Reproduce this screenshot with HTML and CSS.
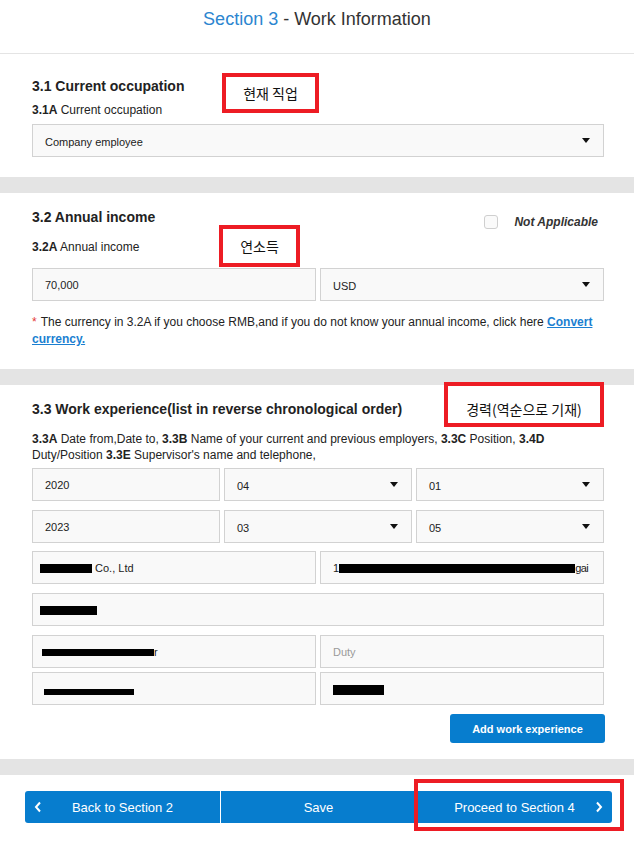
FILE: index.html
```html
<!DOCTYPE html>
<html lang="en">
<head>
<meta charset="utf-8">
<title>Section 3 - Work Information</title>
<link rel="stylesheet" href="styles.css">
</head>
<body>
<header class="page-header">
  <h1 class="title"><span class="title-num">Section 3</span> - Work Information</h1>
</header>
<main class="sections">
  <section class="card card-first">
    <h3 class="q-title">3.1 Current occupation</h3>
    <div class="q-label"><b>3.1A</b> Current occupation</div>
    <div class="field select mt6"><span class="val">Company employee</span><span class="caret"></span></div>
    <div class="tag tag-job">현재 직업</div>
  </section>

  <section class="card card-income">
    <div class="q-head">
      <h3 class="q-title">3.2 Annual income</h3>
      <div class="na">
        <span class="checkbox"></span>
        <span class="na-text">Not Applicable</span>
      </div>
    </div>
    <div class="q-label mt10"><b>3.2A</b> Annual income</div>
    <div class="grid2 mt13">
      <div class="field"><span class="val">70,000</span></div>
      <div class="field select"><span class="val">USD</span><span class="caret"></span></div>
    </div>
    <p class="note"><span class="star">*</span> The currency in 3.2A if you choose RMB,and if you do not know your annual income, click here <a class="link" href="#">Convert currency.</a></p>
    <div class="tag tag-income">연소득</div>
  </section>

  <section class="card card-work">
    <h3 class="q-title">3.3 Work experience(list in reverse chronological order)</h3>
    <p class="desc"><b>3.3A</b> Date from,Date to, <b>3.3B</b> Name of your current and previous employers, <b>3.3C</b> Position, <b>3.4D</b> Duty/Position <b>3.3E</b> Supervisor's name and telephone,</p>
    <div class="rows">
      <div class="grid3">
        <div class="field"><span class="val">2020</span></div>
        <div class="field select"><span class="val">04</span><span class="caret"></span></div>
        <div class="field select"><span class="val">01</span><span class="caret"></span></div>
      </div>
      <div class="grid3">
        <div class="field"><span class="val">2023</span></div>
        <div class="field select"><span class="val">03</span><span class="caret"></span></div>
        <div class="field select"><span class="val">05</span><span class="caret"></span></div>
      </div>
      <div class="grid2 row-tight1">
        <div class="field"><span class="val"><span class="redact r-company"></span> Co., Ltd</span></div>
        <div class="field"><span class="val">1<span class="redact r-address"></span><span class="clip">gai</span></span></div>
      </div>
      <div class="field"><span class="val"><span class="redact r-phone"></span></span></div>
      <div class="grid2">
        <div class="field"><span class="val"><span class="redact r-position"></span>r</span></div>
        <div class="field"><span class="val placeholder">Duty</span></div>
      </div>
      <div class="grid2 row-tight2">
        <div class="field"><span class="val"><span class="redact r-name"></span></span></div>
        <div class="field"><span class="val"><span class="redact r-tel"></span></span></div>
      </div>
      <button class="btn-add" type="button">Add work experience</button>
    </div>
    <div class="tag tag-work">경력(역순으로 기재)</div>
  </section>

  <footer class="card footer">
    <nav class="nav-btns">
      <a class="nav-btn nav-first" href="#">
        <svg class="chev" width="8" height="12" viewBox="0 0 8 12"><path d="M6 1.5 L2 6 L6 10.5" fill="none" stroke="#fff" stroke-width="2"/></svg>
        <span class="nav-text">Back to Section 2</span>
        <span></span>
      </a>
      <a class="nav-btn" href="#">
        <span></span>
        <span class="nav-text">Save</span>
        <span></span>
      </a>
      <a class="nav-btn nav-last" href="#">
        <span></span>
        <span class="nav-text">Proceed to Section 4</span>
        <svg class="chev" width="8" height="12" viewBox="0 0 8 12"><path d="M2 1.5 L6 6 L2 10.5" fill="none" stroke="#fff" stroke-width="2"/></svg>
      </a>
    </nav>
    <div class="tag tag-next"></div>
  </footer>
</main>
</body>
</html>
```

FILE: styles.css
```css
* { box-sizing: border-box; }

body {
  margin: 0;
  background: #fff;
  font-family: "Liberation Sans", Arial, "Noto Sans CJK KR", sans-serif;
  color: #222;
}

.page-header {
  height: 54px;
  padding-top: 8px;
  border-bottom: 1px solid #e4e4e4;
  background: #fff;
}

.title {
  margin: 0;
  text-align: center;
  font-size: 18px;
  line-height: 22px;
  font-weight: normal;
  color: #333;
}

.title-num { color: #2c86d0; }

.sections {
  display: flex;
  flex-direction: column;
  gap: 16px;
  background: #e4e4e4;
}

.card {
  position: relative;
  background: #fff;
  padding: 14px 30px 0 32px;
}

.card-first { padding-top: 22px; padding-bottom: 20px; }
.card-income { padding-bottom: 21px; }
.card-work { padding-bottom: 16px; }

.q-title {
  margin: 0;
  font-size: 14px;
  line-height: 20px;
  font-weight: bold;
  color: #222;
}

.q-label {
  margin-top: 6px;
  font-size: 12px;
  line-height: 16px;
  color: #222;
}

.mt6 { margin-top: 6px; }
.mt10 { margin-top: 10px; }
.mt13 { margin-top: 13px; }

.q-head {
  display: flex;
  justify-content: space-between;
  align-items: flex-start;
  height: 22px;
}

.na {
  display: flex;
  align-items: center;
  gap: 16px;
  margin-top: 8px;
  padding-right: 6px;
  height: 14px;
}

.checkbox {
  width: 14px;
  height: 14px;
  border: 1px solid #cfcfcf;
  border-radius: 3px;
  background: #fafafa;
}

.na-text {
  font-size: 12px;
  font-weight: bold;
  font-style: italic;
  color: #333;
}

.field {
  display: flex;
  align-items: center;
  justify-content: space-between;
  height: 33px;
  padding: 0 12px;
  border: 1px solid #d2d2d2;
  background: #f9f9f9;
  font-size: 11px;
  color: #222;
  white-space: nowrap;
  overflow: hidden;
}

.select .val { padding-top: 3px; }

.caret {
  width: 0;
  height: 0;
  margin-right: 1px;
  border-left: 4px solid transparent;
  border-right: 4px solid transparent;
  border-top: 5px solid #111;
}

.placeholder { color: #9a9a9a; }

.grid2 {
  display: grid;
  grid-template-columns: 1fr 1fr;
  gap: 4px;
}

.grid3 {
  display: grid;
  grid-template-columns: 1fr 1fr 1fr;
  gap: 4px;
}

.note {
  margin: 13px 0 0;
  font-size: 12px;
  line-height: 17px;
  color: #222;
}

.star {
  color: #e53935;
  margin-right: 1px;
}

.link {
  color: #1b7fd1;
  font-weight: bold;
  text-decoration: underline;
}

.desc {
  margin: 12px 0 0;
  font-size: 12px;
  line-height: 16px;
  color: #222;
}

.rows {
  display: flex;
  flex-direction: column;
  gap: 9px;
  margin-top: 5px;
}

.row-tight1 { margin-top: -1px; }
.row-tight2 { margin-top: -5px; }

.redact {
  display: inline-block;
  background: #000;
  vertical-align: middle;
}

.r-company { width: 52px; height: 9px; margin-left: -5px; }
.r-address { width: 236px; height: 9px; }
.r-phone { width: 57px; height: 9px; margin-left: -5px; }
.r-position { width: 112px; height: 7px; margin-left: -3px; }
.r-name { width: 90px; height: 6px; margin-left: -1px; margin-top: 4px; }
.r-tel { width: 51px; height: 10px; }

.clip { letter-spacing: -0.5px; }

.btn-add {
  align-self: flex-end;
  margin-right: -1px;
  width: 155px;
  height: 29px;
  border: 0;
  border-radius: 3px;
  background: #077dce;
  color: #fff;
  font-family: "Liberation Sans", Arial, sans-serif;
  font-size: 11px;
  font-weight: bold;
}

.footer {
  padding: 16px 22px 25px 25px;
}

.nav-btns {
  display: grid;
  grid-template-columns: 1fr 1fr 1fr;
  gap: 1px;
  background: #fff;
}

.nav-btn {
  display: grid;
  grid-template-columns: 26px 1fr 26px;
  align-items: center;
  justify-items: center;
  height: 32px;
  background: #077dce;
  color: #fff;
  text-decoration: none;
  font-size: 13px;
}

.nav-first { border-radius: 3px 0 0 3px; }
.nav-last { border-radius: 0 3px 3px 0; }

.nav-text { white-space: nowrap; }

.chev { display: block; }

.tag {
  position: absolute;
  display: flex;
  align-items: center;
  justify-content: center;
  border: 4px solid #ed1c24;
  background: #fff;
  font-family: "Noto Sans CJK KR", "Liberation Sans", sans-serif;
  font-size: 14px;
  color: #111;
  white-space: nowrap;
}

.tag-job { left: 222px; top: 19px; width: 97px; height: 40px; }
.tag-income { left: 219px; top: 32px; width: 81px; height: 42px; }
.tag-work { left: 444px; top: -3px; width: 160px; height: 45px; padding-top: 9px; }
.tag-next { left: 414px; top: 4px; width: 210px; height: 52px; background: transparent; }
```
